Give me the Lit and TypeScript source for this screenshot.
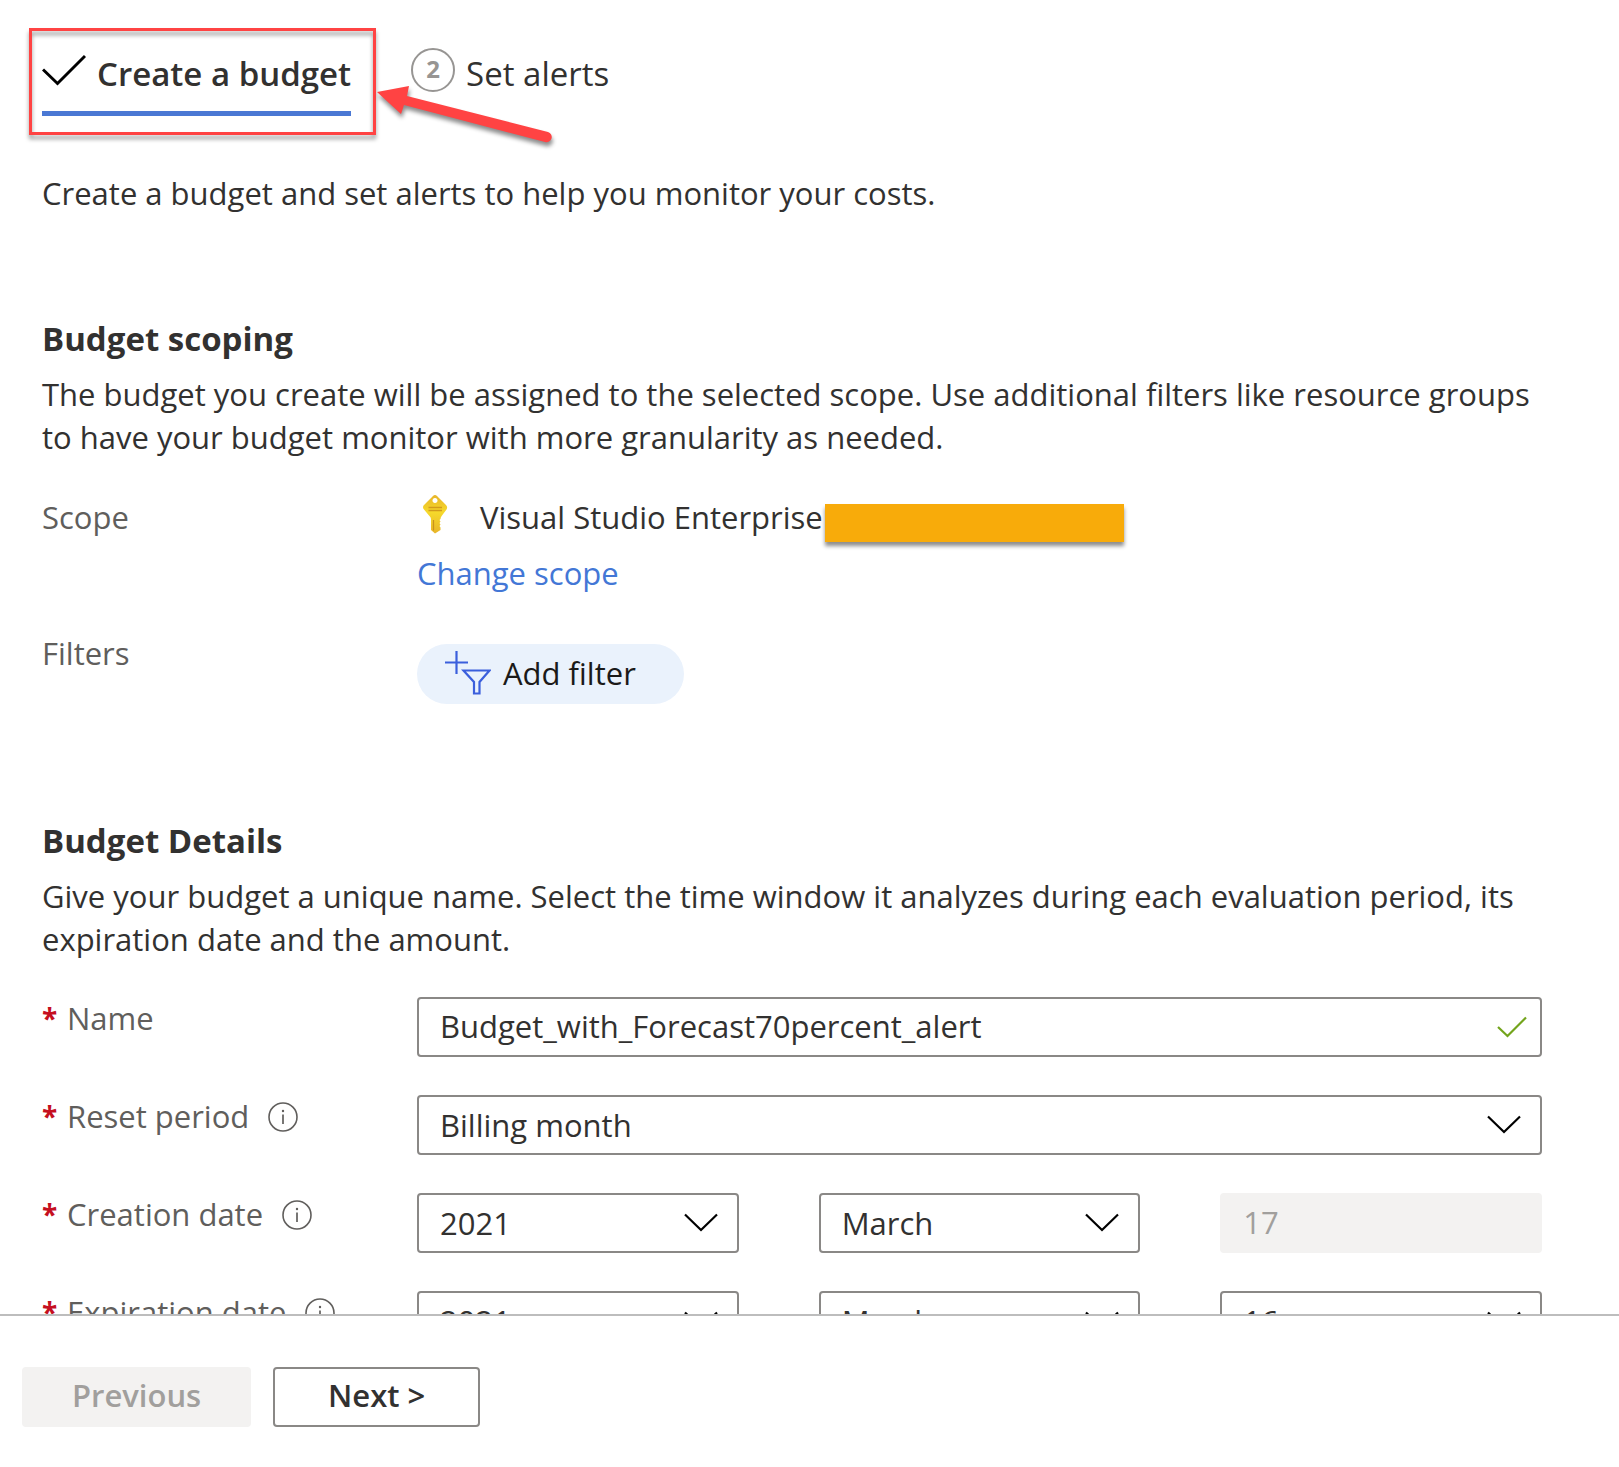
import { LitElement, html, css, svg } from "lit";
import { customElement, property, state } from "lit/decorators.js";

const chevron = html`<svg class="chevron" viewBox="0 0 34 20" aria-hidden="true">
  <path d="M1 1.5 L17 17 L33 1.5" fill="none" stroke="#000" stroke-width="2.2" />
</svg>`;

const infoGlyph = svg`
  <circle cx="15" cy="15" r="14" fill="none" stroke="#605e5c" stroke-width="1.6" />
  <path d="M15 12.5 V22" stroke="#605e5c" stroke-width="1.7" />
  <circle cx="15" cy="9" r="1.2" fill="#605e5c" />`;

const controlStyles = css`
  * {
    box-sizing: border-box;
  }
  input,
  select,
  button {
    font: inherit;
    color: inherit;
    margin: 0;
  }
`;

@customElement("drop-down")
class DropDown extends LitElement {
  @property() label = "";
  @property() value = "";
  @property({ type: Array }) options: string[] = [];

  static styles = [
    controlStyles,
    css`
      :host {
        display: grid;
        min-width: 0;
      }
      .box {
        display: grid;
        grid-template-columns: 1fr auto;
        align-items: center;
      }
      .select {
        grid-area: 1 / 1 / 2 / 3;
        width: 100%;
        height: 60px;
        padding: 1px 64px 0 21px;
        border: 2px solid #8a8886;
        border-radius: 4px;
        background: #fff;
        color: #323130;
        appearance: none;
      }
      .chevron {
        grid-area: 1 / 2 / 2 / 3;
        width: 34px;
        height: 20px;
        margin-right: 21px;
        pointer-events: none;
      }
    `,
  ];

  render() {
    return html`<div class="box">
      <select class="select" aria-label=${this.label}>
        ${this.options.map((o) => html`<option ?selected=${o === this.value}>${o}</option>`)}
      </select>
      ${chevron}
    </div>`;
  }
}

@customElement("field-row")
class FieldRow extends LitElement {
  @property() label = "";
  @property({ type: Boolean }) required = false;
  @property({ type: Boolean }) info = false;

  static styles = [
    controlStyles,
    css`
      :host {
        display: grid;
        grid-template-columns: 375px minmax(0, 1fr);
        align-items: start;
      }
      .label {
        display: flex;
        align-items: center;
        color: #605e5c;
        line-height: 43px;
      }
      .star {
        width: 25px;
        color: #c50f1f;
        font-size: 28px;
        font-weight: 700;
      }
      .info {
        display: flex;
        margin-left: 19px;
        padding: 0;
        border: 0;
        background: none;
      }
      .info svg {
        width: 30px;
        height: 30px;
      }
    `,
  ];

  render() {
    return html`
      <div class="label">
        ${this.required ? html`<span class="star" aria-hidden="true">*</span>` : ""}
        <slot name="label">${this.label}</slot>
        ${this.info
          ? html`<button class="info" type="button" aria-label=${"About " + this.label}>
              <svg viewBox="0 0 30 30">${infoGlyph}</svg>
            </button>`
          : ""}
      </div>
      <slot></slot>
    `;
  }
}

@customElement("app-root")
class AppRoot extends LitElement {
  @state() private name = "Budget_with_Forecast70percent_alert";

  private years = ["2021", "2022", "2023"];
  private months = ["January", "February", "March", "April", "May", "June"];

  static styles = [
    controlStyles,
    css`
      :host {
        display: flex;
        flex-direction: column;
        height: 100vh;
        overflow: hidden;
        background: #fff;
        color: #323130;
        font-family: "Open Sans", "Noto Sans", sans-serif;
        font-size: 31px;
        line-height: 43px;
      }
      .content {
        flex: 1;
        min-height: 0;
        overflow: hidden;
        padding: 52px 77px 0 42px;
      }
      h2,
      p {
        margin: 0;
      }
      h2 {
        font-size: 33px;
        font-weight: 700;
        line-height: 43px;
      }
      .tabs {
        position: relative;
        display: flex;
        gap: 60px;
        align-items: flex-start;
      }
      .tab {
        display: flex;
        gap: 11px;
        height: 64px;
        padding: 0;
        border: 0;
        background: none;
        font-size: 33px;
        white-space: nowrap;
      }
      .current {
        border-bottom: 5px solid #4a78d4;
        font-weight: 600;
      }
      .check {
        width: 44px;
        height: 34px;
      }
      .number {
        display: grid;
        place-items: center;
        width: 44px;
        height: 44px;
        margin-top: -4px;
        padding-bottom: 3px;
        border: 2px solid #979593;
        border-radius: 50%;
        color: #979593;
        font-size: 24px;
        font-weight: 700;
        line-height: 36px;
      }
      .callout {
        position: absolute;
        inset: -24px auto auto -13px;
        width: 347px;
        height: 107px;
        border: 3px solid #ff4343;
        filter: drop-shadow(0 4px 2px rgba(0, 0, 0, 0.4));
        pointer-events: none;
      }
      .arrow {
        position: absolute;
        top: 28px;
        left: 330px;
        width: 190px;
        height: 76px;
        filter: drop-shadow(1px 4px 2px rgba(0, 0, 0, 0.45));
        pointer-events: none;
      }
      .intro {
        padding-top: 56px;
      }
      section {
        display: flex;
        flex-direction: column;
      }
      .scoping {
        gap: 37px;
        padding-top: 102px;
      }
      .details {
        gap: 38px;
        padding-top: 115px;
      }
      .heading {
        display: grid;
        gap: 13px;
      }
      .details .heading {
        margin-bottom: -2px;
      }
      .stack {
        display: grid;
        gap: 13px;
        justify-items: start;
      }
      .scope {
        display: flex;
        gap: 2px;
        height: 43px;
        white-space: nowrap;
      }
      .key {
        width: 26px;
        height: 40px;
        margin: -2px 30px 0 5px;
      }
      .hidden-id {
        width: 299px;
        height: 38px;
        margin-top: 8px;
        background: #f8ab0a;
        box-shadow: 0 4px 4px rgba(0, 0, 0, 0.45);
      }
      .link {
        color: #4377d6;
        text-decoration: none;
      }
      .add {
        display: flex;
        align-items: center;
        gap: 12px;
        height: 60px;
        margin-top: 12px;
        padding: 0 48px 2px 28px;
        border: 0;
        border-radius: 30px;
        background: #eaf2fc;
        color: #1b1a19;
      }
      .funnel {
        width: 46px;
        height: 46px;
      }
      .text {
        display: grid;
        grid-template-columns: 1fr auto;
        align-items: center;
      }
      .input {
        width: 100%;
        height: 60px;
        padding: 0 64px 3px 21px;
        border: 2px solid #8a8886;
        border-radius: 4px;
        background: #fff;
      }
      .text .input {
        grid-area: 1 / 1 / 2 / 3;
      }
      .input:disabled {
        border-color: #f3f2f1;
        background: #f3f2f1;
        color: #a19f9d;
      }
      .valid {
        grid-area: 1 / 2 / 2 / 3;
        width: 30px;
        height: 22px;
        margin-right: 15px;
      }
      .dates {
        display: grid;
        grid-template-columns: repeat(3, minmax(0, 1fr));
        gap: 80px;
      }
      .footer {
        display: flex;
        gap: 22px;
        padding: 51px 22px 40px;
        border-top: 2px solid #bdbdbd;
        background: #fff;
      }
      .button {
        min-width: 207px;
        height: 60px;
        padding: 0 48px 4px;
        border: 2px solid #8a8886;
        border-radius: 4px;
        background: #fff;
        font-weight: 600;
      }
      .button:disabled {
        border-color: #f3f2f1;
        background: #f3f2f1;
        color: #a19f9d;
      }
    `,
  ];

  private dateFields(kind: string, day: unknown) {
    return html`<div class="dates">
      <drop-down label="${kind} year" value="2021" .options=${this.years}></drop-down>
      <drop-down label="${kind} month" value="March" .options=${this.months}></drop-down>
      ${day}
    </div>`;
  }

  render() {
    return html`
      <main class="content">
        <nav class="tabs">
          <button class="tab current" type="button">
            <svg class="check" viewBox="0 0 44 34" aria-hidden="true">
              <path d="M1 17.5 L15.500 31.500 L43 4" fill="none" stroke="#000" stroke-width="3" />
            </svg>
            Create a budget
          </button>
          <button class="tab" type="button"><span class="number">2</span>Set alerts</button>
          <div class="callout"></div>
          <svg class="arrow" viewBox="0 0 190 76" aria-hidden="true">
            <path
              d="M5 12 L37 6 L35 16 L176 52 A5 5 0 0 1 173 62 L32 25 L29 34 Z"
              fill="#ff4343"
            />
          </svg>
        </nav>

        <p class="intro">Create a budget and set alerts to help you monitor your costs.</p>

        <section class="scoping">
          <div class="heading">
            <h2>Budget scoping</h2>
            <p>
              The budget you create will be assigned to the selected scope. Use additional filters
              like resource groups to have your budget monitor with more granularity as needed.
            </p>
          </div>
          <field-row label="Scope">
            <div class="stack">
              <div class="scope">
                <svg class="key" viewBox="0 0 26 40" aria-hidden="true">
                  <defs>
                    <linearGradient id="gold" x1="0" y1="0" x2="0" y2="1">
                      <stop offset="0" stop-color="#e8b52a" />
                      <stop offset="0.45" stop-color="#f6d92b" />
                      <stop offset="1" stop-color="#e8b52a" />
                    </linearGradient>
                  </defs>
                  <path
                    fill="url(#gold)"
                    fill-rule="evenodd"
                    d="M11 2 Q13 0 15 2 L24 11 Q26 13 24.500 15.500 L20 21.500 Q18.500 23 18.500 25 L17.500 26 L18.500 27.500 L17.500 29 L18.500 30.500 L17.500 32 L18.500 33.500 V36 L13 39.500 L9 36 V25 Q9 23 7 21.500 L2 15.500 Q0 13 2 11 Z M13 4 a2.500 2.500 0 1 0 0.010 0 Z"
                  />
                  <path d="M6.500 13.500 H20 M6.500 16.500 H20" stroke="#d19a1c" stroke-width="1.300" />
                  <path d="M11.500 26 V36.500" stroke="#c9931b" stroke-width="1.200" />
                </svg>
                <span>Visual Studio Enterprise</span>
                <span class="hidden-id"></span>
              </div>
              <a class="link" href="#scope">Change scope</a>
            </div>
          </field-row>
          <field-row label="Filters">
            <div class="stack">
              <button class="add" type="button">
                <svg class="funnel" viewBox="0 0 46 46" aria-hidden="true">
                  <path
                    d="M11.500 1 V24 M0 12.500 H23 M18.500 20.500 H44.500 L34.500 32 V43.500 H29 V32 Z"
                    fill="none"
                    stroke="#3b5fdc"
                    stroke-width="2.2"
                  />
                </svg>
                Add filter
              </button>
            </div>
          </field-row>
        </section>

        <section class="details">
          <div class="heading">
            <h2>Budget Details</h2>
            <p>
              Give your budget a unique name. Select the time window it analyzes during each
              evaluation period, its expiration date and the amount.
            </p>
          </div>
          <field-row label="Name" required>
            <label slot="label" for="name">Name</label>
            <div class="text">
              <input
                class="input"
                id="name"
                .value=${this.name}
                @input=${(e: Event) => (this.name = (e.target as HTMLInputElement).value)}
              />
              <svg class="valid" viewBox="0 0 30 22" aria-hidden="true">
                <path d="M1 11 L10.500 20 L29 1.500" fill="none" stroke="#73a41c" stroke-width="2.2" />
              </svg>
            </div>
          </field-row>
          <field-row label="Reset period" required info>
            <drop-down
              label="Reset period"
              value="Billing month"
              .options=${["Billing month", "Billing quarter", "Billing year"]}
            ></drop-down>
          </field-row>
          <field-row label="Creation date" required info>
            ${this.dateFields(
              "Creation",
              html`<input class="input" aria-label="Creation day" value="17" disabled />`
            )}
          </field-row>
          <field-row label="Expiration date" required info>
            ${this.dateFields(
              "Expiration",
              html`<drop-down label="Expiration day" value="16" .options=${["15", "16", "17"]}></drop-down>`
            )}
          </field-row>
        </section>
      </main>
      <footer class="footer">
        <button class="button" type="button" disabled>Previous</button>
        <button class="button" type="button">Next &gt;</button>
      </footer>
    `;
  }
}
